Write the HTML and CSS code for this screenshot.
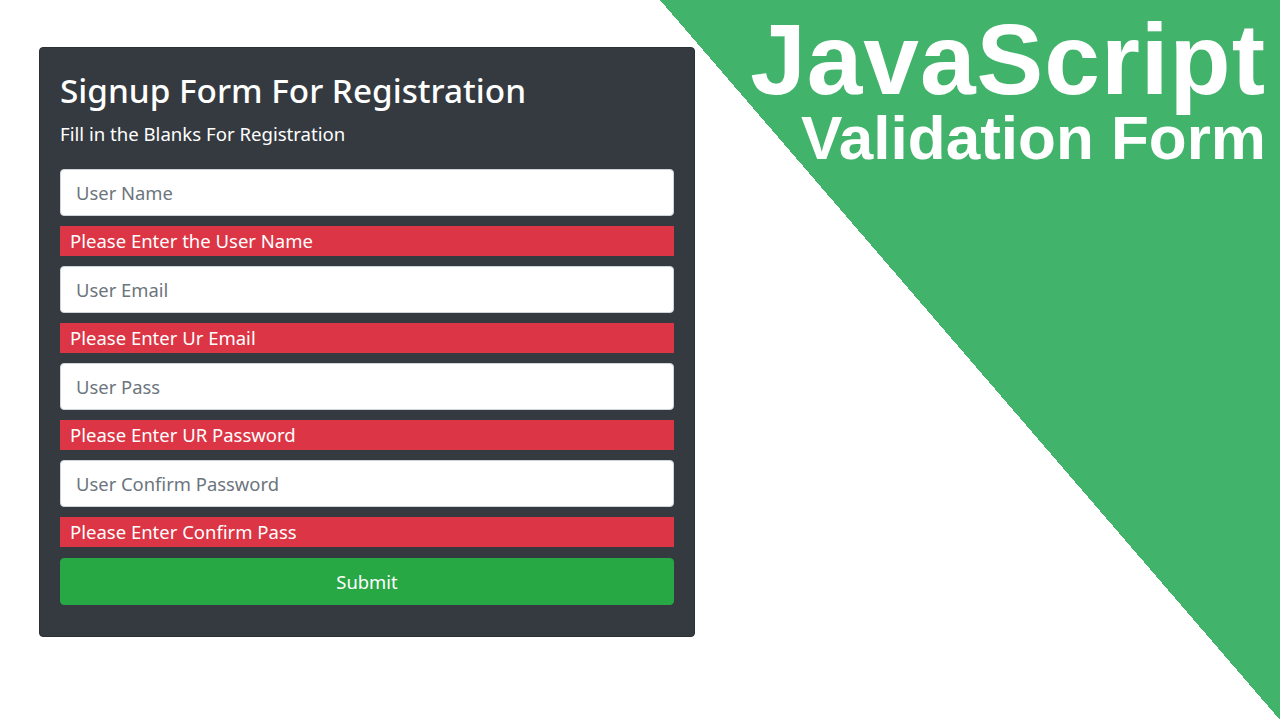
FILE: index.html
```html
<!DOCTYPE html>
<html lang="en">
<head>
<meta charset="utf-8">
<title>JavaScript Validation Form</title>
<link rel="stylesheet" href="styles.css">
</head>
<body>
<div class="page">
  <div class="left">
    <form class="card">
      <h2 class="title">Signup Form For Registration</h2>
      <p class="subtitle">Fill in the Blanks For Registration</p>
      <input class="field" type="text" placeholder="User Name">
      <div class="error">Please Enter the User Name</div>
      <input class="field" type="email" placeholder="User Email">
      <div class="error">Please Enter Ur Email</div>
      <input class="field" type="password" placeholder="User Pass">
      <div class="error">Please Enter UR Password</div>
      <input class="field" type="password" placeholder="User Confirm Password">
      <div class="error">Please Enter Confirm Pass</div>
      <button class="submit" type="button">Submit</button>
    </form>
  </div>
  <div class="banner">
    <div class="banner-big">JavaScript</div>
    <div class="banner-small">Validation Form</div>
  </div>
</div>
</body>
</html>
```
FILE: styles.css
```css
* { box-sizing: border-box; }
html, body { margin: 0; padding: 0; background: #ffffff; }
body { font-family: "Noto Sans", "Open Sans", sans-serif; }
.page { display: flex; width: 1280px; height: 720px; overflow: hidden; }
.left { width: 660px; flex: none; padding: 47px 0 0 39px; }
.card {
  width: 656px;
  background: #343a40;
  border: 1px solid #2b3035;
  border-radius: 4px;
  padding: 21px 20px 31px 20px;
  display: flex;
  flex-direction: column;
}
.title {
  margin: 0;
  color: #fff;
  font-size: 33.3px;
  font-weight: 500;
  line-height: 42px;
}
.subtitle {
  margin: 10px 0 22px 0;
  color: #fff;
  font-size: 18.6px;
  line-height: 26px;
}
.field {
  display: block;
  width: 100%;
  height: 47px;
  border: 1px solid #ced4da;
  border-radius: 4px;
  padding: 0 15px;
  font-family: inherit;
  font-size: 18.4px;
  color: #495057;
  background: #fff;
  outline: none;
}
.field::placeholder { color: #6c757d; }
.error {
  margin: 10px 0 10px 0;
  height: 30px;
  background: #dc3545;
  color: #fff;
  font-size: 18.5px;
  line-height: 30px;
  padding: 0 10px;
}
.submit {
  display: block;
  width: 100%;
  height: 47px;
  margin-top: 1px;
  border: 1px solid #28a745;
  border-radius: 4px;
  background: #28a745;
  color: #fff;
  font-family: inherit;
  font-size: 18.4px;
}
.banner {
  width: 620px;
  height: 720px;
  flex: none;
  background: linear-gradient(to bottom left, #42b36b 50%, transparent 50%);
  text-align: right;
  padding: 14px 14px 0 0;
  color: #fff;
  font-family: "Liberation Sans", Arial, sans-serif;
  font-weight: 700;
}
.banner-big { font-size: 100px; line-height: 90px; letter-spacing: 1px; }
.banner-small { font-size: 62px; line-height: 68px; }
```
